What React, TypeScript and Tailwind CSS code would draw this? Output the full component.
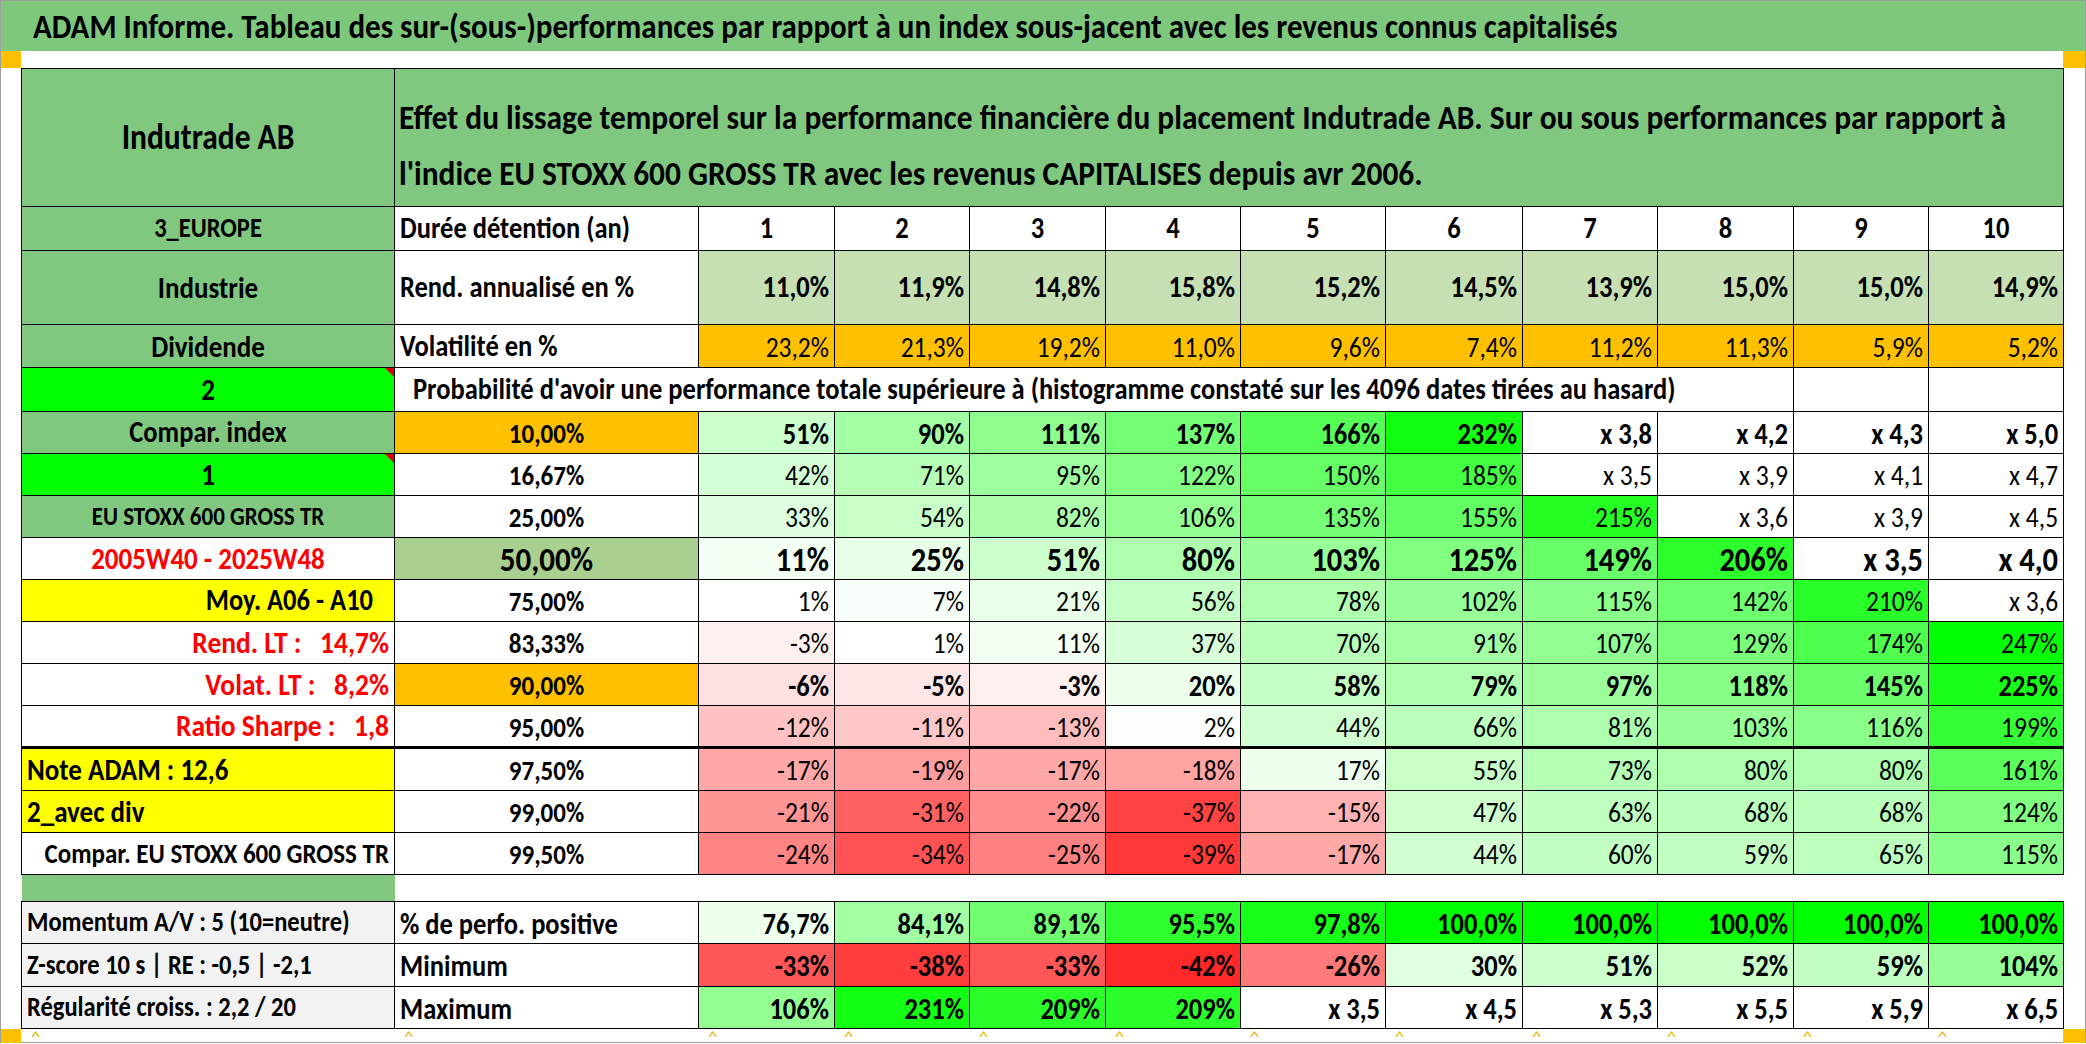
import React from "react";

type Mode = "std" | "mom";

interface ProbRow {
  label: string;
  labelCls: string;
  pct: string;
  pctCls?: string;
  flag?: boolean;
  bold?: boolean;
  big?: boolean;
  thickTop?: boolean;
  h: string;
  vals: string[];
}

interface StatRow {
  label: string;
  name: string;
  mode: Mode;
  vals: string[];
}

// colour of a heat-map cell, taken from its value
function heat(text: string, mode: Mode): string {
  if (text.startsWith("x")) return "#ffffff";
  const v = parseFloat(text.replace(",", ".").replace("%", ""));
  if (v < 0) {
    const t = Math.min(-v / 50, 1);
    const c = Math.round(255 * (1 - t));
    return `rgb(255,${c},${c})`;
  }
  const t = mode === "mom" ? Math.max(0, Math.min((v - 75) / 25, 1)) : Math.min(v / 250, 1);
  const c = Math.round(255 * (1 - t));
  return `rgb(${c},255,${c})`;
}

const COL_CLS = [
  "w-[373px]",
  "w-[304px]",
  "w-[136px]",
  "w-[135px]",
  "w-[136px]",
  "w-[135px]",
  "w-[145px]",
  "w-[137px]",
  "w-[135px]",
  "w-[136px]",
  "w-[135px]",
  "w-[135px]",
];

const cell = "border border-black whitespace-nowrap overflow-hidden leading-none";

const rend = ["11,0%", "11,9%", "14,8%", "15,8%", "15,2%", "14,5%", "13,9%", "15,0%", "15,0%", "14,9%"];
const vola = ["23,2%", "21,3%", "19,2%", "11,0%", "9,6%", "7,4%", "11,2%", "11,3%", "5,9%", "5,2%"];

const probRows: ProbRow[] = [
  {
    label: "Compar. index",
    labelCls: "bg-[#80c780] text-center text-[26.5px]",
    pct: "10,00%",
    pctCls: "bg-[#ffc000] text-[25px]",
    bold: true,
    h: "h-[42px]",
    vals: ["51%", "90%", "111%", "137%", "166%", "232%", "x 3,8", "x 4,2", "x 4,3", "x 5,0"],
  },
  {
    label: "1",
    labelCls: "bg-[#00ff00] text-center text-[27px]",
    flag: true,
    pct: "16,67%",
    h: "h-[42px]",
    vals: ["42%", "71%", "95%", "122%", "150%", "185%", "x 3,5", "x 3,9", "x 4,1", "x 4,7"],
  },
  {
    label: "EU STOXX 600 GROSS TR",
    labelCls: "bg-[#80c780] text-center text-[23px]",
    pct: "25,00%",
    h: "h-[42px]",
    vals: ["33%", "54%", "82%", "106%", "135%", "155%", "215%", "x 3,6", "x 3,9", "x 4,5"],
  },
  {
    label: "2005W40 - 2025W48",
    labelCls: "bg-white text-center text-[#ff0000] text-[27px]",
    pct: "50,00%",
    pctCls: "bg-[#a9d08e] text-[31px]",
    bold: true,
    big: true,
    h: "h-[42px]",
    vals: ["11%", "25%", "51%", "80%", "103%", "125%", "149%", "206%", "x 3,5", "x 4,0"],
  },
  {
    label: "Moy. A06 - A10",
    labelCls: "bg-[#ffff00] text-right pr-[21px] text-[26.5px]",
    pct: "75,00%",
    h: "h-[42px]",
    vals: ["1%", "7%", "21%", "56%", "78%", "102%", "115%", "142%", "210%", "x 3,6"],
  },
  {
    label: "Rend. LT :   14,7%",
    labelCls: "bg-white text-right pr-[5px] text-[#ff0000] text-[27.5px]",
    pct: "83,33%",
    h: "h-[42px]",
    vals: ["-3%", "1%", "11%", "37%", "70%", "91%", "107%", "129%", "174%", "247%"],
  },
  {
    label: "Volat. LT :   8,2%",
    labelCls: "bg-white text-right pr-[5px] text-[#ff0000] text-[27.5px]",
    pct: "90,00%",
    pctCls: "bg-[#ffc000] text-[25px]",
    bold: true,
    h: "h-[42px]",
    vals: ["-6%", "-5%", "-3%", "20%", "58%", "79%", "97%", "118%", "145%", "225%"],
  },
  {
    label: "Ratio Sharpe :   1,8",
    labelCls: "bg-white text-right pr-[5px] text-[#ff0000] text-[27.5px]",
    pct: "95,00%",
    h: "h-[42px]",
    vals: ["-12%", "-11%", "-13%", "2%", "44%", "66%", "81%", "103%", "116%", "199%"],
  },
  {
    label: "Note ADAM : 12,6",
    labelCls: "bg-[#ffff00] text-left pl-[5px] text-[27px]",
    pct: "97,50%",
    thickTop: true,
    h: "h-[43px]",
    vals: ["-17%", "-19%", "-17%", "-18%", "17%", "55%", "73%", "80%", "80%", "161%"],
  },
  {
    label: "2_avec div",
    labelCls: "bg-[#ffff00] text-left pl-[5px] text-[27px]",
    pct: "99,00%",
    h: "h-[42px]",
    vals: ["-21%", "-31%", "-22%", "-37%", "-15%", "47%", "63%", "68%", "68%", "124%"],
  },
  {
    label: "Compar. EU STOXX 600 GROSS TR",
    labelCls: "bg-white text-right pr-[5px] text-[25px]",
    pct: "99,50%",
    h: "h-[42px]",
    vals: ["-24%", "-34%", "-25%", "-39%", "-17%", "44%", "60%", "59%", "65%", "115%"],
  },
];

const statRows: StatRow[] = [
  {
    label: "Momentum A/V : 5 (10=neutre)",
    name: "% de perfo. positive",
    mode: "mom",
    vals: ["76,7%", "84,1%", "89,1%", "95,5%", "97,8%", "100,0%", "100,0%", "100,0%", "100,0%", "100,0%"],
  },
  {
    label: "Z-score 10 s | RE : -0,5 | -2,1",
    name: "Minimum",
    mode: "std",
    vals: ["-33%", "-38%", "-33%", "-42%", "-26%", "30%", "51%", "52%", "59%", "104%"],
  },
  {
    label: "Régularité croiss. : 2,2 / 20",
    name: "Maximum",
    mode: "std",
    vals: ["106%", "231%", "209%", "209%", "x 3,5", "x 4,5", "x 5,3", "x 5,5", "x 5,9", "x 6,5"],
  },
];

// the sheet's text is drawn a little taller than the font's own shape
const T = ({ children }: { children: React.ReactNode }) => (
  <span className="inline-block scale-y-[1.12] whitespace-pre">{children}</span>
);

const Flag = () => (
  <svg className="absolute top-0 right-0" width="9" height="9" viewBox="0 0 9 9">
    <polygon points="0,0 9,0 9,9" fill="#e00000" />
  </svg>
);

const Caret = () => (
  <svg width="9" height="6" viewBox="0 0 9 6">
    <polyline points="1,6 4.5,1 8,6" fill="none" stroke="#e8b400" strokeWidth="1.3" />
  </svg>
);

export default function App() {
  return (
    <div className="w-[2086px] h-[1044px] bg-white overflow-hidden font-['Carlito','Liberation_Sans_Narrow','Arial_Narrow','Liberation_Sans',sans-serif] text-black">
      <div className="w-[2086px] h-[1043px] border border-[#9e9e9e] flex flex-col">
        {/* title bar */}
        <div className="h-[50px] shrink-0 bg-[#7ec87e] pl-[32px] flex items-center text-[31px] font-bold whitespace-nowrap">
          <T>
            ADAM Informe. Tableau des sur-(sous-)performances par rapport à un index sous-jacent avec les revenus connus capitalisés
          </T>
        </div>
        <div className="h-[17px] shrink-0 flex justify-between">
          <div className="w-[20px] bg-[#ffc000]" />
          <div className="w-[22px] bg-[#ffc000]" />
        </div>

        <div className="pl-[20px] shrink-0">
          <table className="table-fixed border-collapse w-[2042px] text-[26.5px]">
            <colgroup>
              {COL_CLS.map((c, i) => (
                <col key={i} className={c} />
              ))}
            </colgroup>
            <tbody>
              {/* header */}
              <tr className="h-[138px]">
                <td className={`${cell} bg-[#80c780] text-center font-bold text-[31.5px]`}>
                  <T>Indutrade AB</T>
                </td>
                <td colSpan={11} className={`${cell} bg-[#80c780] font-bold text-[31.4px] align-top pl-[4px] pt-[20px]`}>
                  <div className="leading-[56px] scale-y-[1.12]">
                    Effet du lissage temporel sur la performance financière du placement Indutrade AB. Sur ou sous performances par rapport à
                  </div>
                  <div className="leading-[56px] scale-y-[1.12]">
                    l'indice EU STOXX 600 GROSS TR avec les revenus CAPITALISES depuis avr 2006.
                  </div>
                </td>
              </tr>

              <tr className="h-[44px]">
                <td className={`${cell} bg-[#80c780] text-center font-bold text-[24.5px]`}>
                  <T>3_EUROPE</T>
                </td>
                <td className={`${cell} pl-[5px] font-bold`}>
                  <T>Durée détention (an)</T>
                </td>
                {Array.from({ length: 10 }, (_, i) => (
                  <td key={i} className={`${cell} text-center font-bold`}>
                    <T>{i + 1}</T>
                  </td>
                ))}
              </tr>

              <tr className="h-[74px]">
                <td className={`${cell} bg-[#80c780] text-center font-bold text-[27px]`}>
                  <T>Industrie</T>
                </td>
                <td className={`${cell} pl-[5px] font-bold`}>
                  <T>Rend. annualisé en %</T>
                </td>
                {rend.map((v, i) => (
                  <td key={i} className={`${cell} bg-[#c6e0b4] text-right pr-[5px] font-bold`}>
                    <T>{v}</T>
                  </td>
                ))}
              </tr>

              <tr className="h-[43px]">
                <td className={`${cell} bg-[#80c780] text-center font-bold text-[27px]`}>
                  <T>Dividende</T>
                </td>
                <td className={`${cell} pl-[5px] font-bold`}>
                  <T>Volatilité en %</T>
                </td>
                {vola.map((v, i) => (
                  <td key={i} className={`${cell} bg-[#ffc000] text-right pr-[5px] text-[25.5px] pt-[3px]`}>
                    <T>{v}</T>
                  </td>
                ))}
              </tr>

              <tr className="h-[44px]">
                <td className={`${cell} relative bg-[#00ff00] text-center font-bold text-[27px]`}>
                  <T>2</T>
                  <Flag />
                </td>
                <td colSpan={9} className={`${cell} pl-[18px] font-bold`}>
                  <T>
                    Probabilité d'avoir une performance totale supérieure à (histogramme constaté sur les 4096 dates tirées au hasard)
                  </T>
                </td>
                <td className={cell} />
                <td className={cell} />
              </tr>

              {probRows.map((r) => {
                const top = r.thickTop ? " border-t-[3px]" : "";
                return (
                  <tr key={r.label} className={r.h}>
                    <td className={`${cell}${top} relative font-bold ${r.labelCls}`}>
                      <T>{r.label}</T>
                      {r.flag && <Flag />}
                    </td>
                    <td className={`${cell}${top} text-center font-bold pt-[2px] ${r.pctCls ?? "bg-white text-[25px]"}`}>
                      <T>{r.pct}</T>
                    </td>
                    {r.vals.map((v, i) => (
                      <td
                        key={i}
                        className={`${cell}${top} text-right pr-[5px] pt-[3px] ${
                          r.big ? "font-bold text-[30.5px]" : r.bold ? "font-bold" : "font-normal text-[25.5px]"
                        }`}
                        style={{ backgroundColor: heat(v, "std") }}
                      >
                        <T>{v}</T>
                      </td>
                    ))}
                  </tr>
                );
              })}

              {/* spacer row */}
              <tr className="h-[27px]">
                <td className="bg-[#80c780] border-y border-black" />
                <td colSpan={11} className="border-y border-black bg-white" />
              </tr>

              {statRows.map((r, k) => (
                <tr key={r.name} className={k === 1 ? "h-[43px]" : "h-[42px]"}>
                  <td className={`${cell} bg-[#f2f2f2] pl-[5px] font-bold text-[24.5px]`}>
                    <T>{r.label}</T>
                  </td>
                  <td className={`${cell} bg-white pl-[5px] font-bold pt-[3px]`}>
                    <T>{r.name}</T>
                  </td>
                  {r.vals.map((v, i) => (
                    <td
                      key={i}
                      className={`${cell} text-right pr-[5px] pt-[3px] font-bold`}
                      style={{ backgroundColor: heat(v, r.mode) }}
                    >
                      <T>{v}</T>
                    </td>
                  ))}
                </tr>
              ))}
            </tbody>
          </table>
        </div>

        {/* tops of the clipped next row */}
        <div className="flex-1 flex">
          <div className="w-[20px] h-[14px] bg-[#ffc000]" />
          <div className="grid grid-cols-[373px_304px_136px_135px_136px_135px_145px_137px_135px_136px_135px_135px]">
            {COL_CLS.map((c, i) => (
              <div key={i} className="pl-[10px] pt-[2px]">
                <Caret />
              </div>
            ))}
          </div>
          <div className="w-[22px] h-[14px] bg-[#ffc000]" />
        </div>
      </div>
    </div>
  );
}
